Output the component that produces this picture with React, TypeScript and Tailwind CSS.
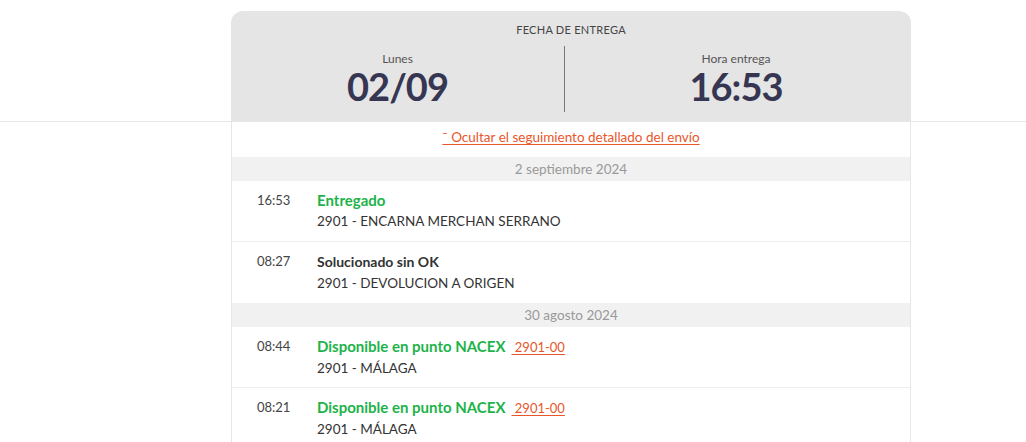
const events = [
  {
    date: '2 septiembre 2024',
    items: [
      { time: '16:53', title: 'Entregado', tone: 'green', place: '2901 - ENCARNA MERCHAN SERRANO' },
      { time: '08:27', title: 'Solucionado sin OK', tone: 'dark', place: '2901 - DEVOLUCION A ORIGEN' },
    ],
  },
  {
    date: '30 agosto 2024',
    items: [
      { time: '08:44', title: 'Disponible en punto NACEX', tone: 'green', code: '2901-00', place: '2901 - MÁLAGA' },
      { time: '08:21', title: 'Disponible en punto NACEX', tone: 'green', code: '2901-00', place: '2901 - MÁLAGA' },
    ],
  },
];

export default function App() {
  return (
    <div className="min-h-screen bg-white font-['Lato','Liberation_Sans',sans-serif] text-[#333]">
      <div className="border-b border-[#e6e6e6] pt-[11px]">
        <div className="ml-[231px] w-[680px] h-[110px] rounded-t-xl bg-[#e5e5e5] pt-[12px] flex flex-col">
          <div className="text-center text-[11px] leading-[14px] text-[#444] tracking-wide">FECHA DE ENTREGA</div>
          <div className="mt-[9px] grid grid-cols-[334px_1fr] h-[66px]">
            <div className="border-r border-[#6f7a7a] flex flex-col items-center pt-[6px]">
              <span className="text-[12px] leading-[14px] text-[#555]">Lunes</span>
              <span className="mt-[1px] text-[38px] leading-[38px] tracking-[-1px] font-bold text-[#363653]">02/09</span>
            </div>
            <div className="flex flex-col items-center pt-[6px] pr-[4px]">
              <span className="text-[12px] leading-[14px] text-[#555]">Hora entrega</span>
              <span className="mt-[1px] text-[38px] leading-[38px] tracking-[-1px] font-bold text-[#363653]">16:53</span>
            </div>
          </div>
        </div>
      </div>

      <div className="ml-[231px] w-[680px] border-x border-[#e6e6e6]">
        <div className="h-[35px] flex justify-center pt-[5px]">
          <a className="text-[13.5px] leading-[20px] text-[#e8562a] underline underline-offset-2 cursor-pointer">
            ¯ Ocultar el seguimiento detallado del envío
          </a>
        </div>
        {events.map((group) => (
          <div key={group.date}>
            <div className="h-[24px] bg-[#f1f1f1] flex items-center justify-center text-[13.5px] text-[#999]">
              {group.date}
            </div>
            {group.items.map((ev, i) => (
              <div
                key={ev.time}
                className={`flex pl-[25px] pt-[9px] h-[61px] ${i < group.items.length - 1 ? 'border-b border-[#eeeeee]' : ''}`}
              >
                <div className="w-[60px] text-[13px] leading-[20px] text-[#444]">{ev.time}</div>
                <div className="flex flex-col">
                  <div className="leading-[20px]">
                    <span
                      className={`font-bold ${ev.tone === 'green' ? 'text-[15px] text-[#1db34a]' : 'text-[14px] text-[#333]'}`}
                    >
                      {ev.title}
                    </span>
                    {ev.code && (
                      <a className="ml-[6px] text-[13px] text-[#e8562a] underline underline-offset-2 cursor-pointer">
                        {'\u00a0' + ev.code}
                      </a>
                    )}
                  </div>
                  <div className="text-[13.5px] leading-[20px] text-[#333] mt-[1px]">{ev.place}</div>
                </div>
              </div>
            ))}
          </div>
        ))}
      </div>
    </div>
  );
}
